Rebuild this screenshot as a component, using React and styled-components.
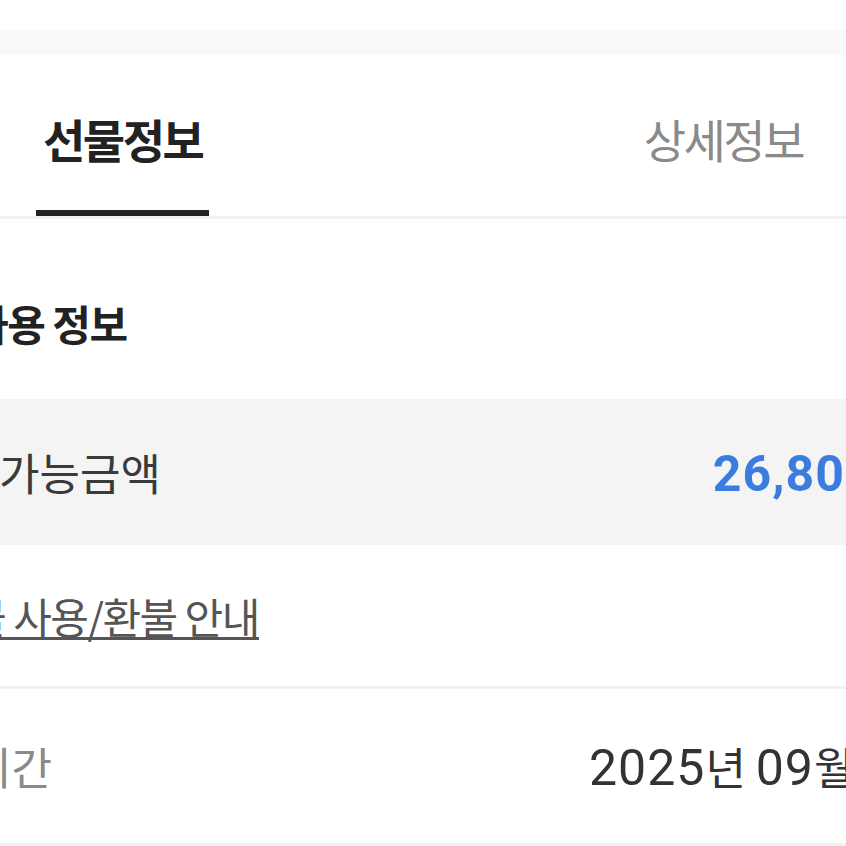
import React from "react";
import styled, { createGlobalStyle } from "styled-components";

const GlobalStyle = createGlobalStyle`
  html, body {
    margin: 0;
    padding: 0;
    background: #ffffff;
  }
  body {
    font-family: "Noto Sans CJK KR", "Noto Sans", sans-serif;
    color: #222;
  }
`;

const Page = styled.div`
  width: 846px;
  height: 846px;
  overflow: hidden;
  padding-top: 30px;
  box-sizing: border-box;
`;

const TopBand = styled.div`
  height: 25px;
  background-color: #f9f9f9;
`;

const TabBar = styled.div`
  display: flex;
  justify-content: space-between;
  height: 164px;
  padding: 0 36px;
  border-bottom: 3px solid #f2f2f2;
  box-sizing: border-box;
`;

const Tab = styled.div`
  display: flex;
  align-items: center;
  padding: 10px 7px 0;
  font-size: 46px;
  letter-spacing: -2.5px;
  font-weight: ${(p) => (p.$active ? 700 : 400)};
  color: ${(p) => (p.$active ? "#222" : "#8a8a8a")};
  border-bottom: 6px solid ${(p) => (p.$active ? "#222" : "transparent")};
`;

const Content = styled.div`
  margin: 0 -160px 0 -120px;
`;

const SectionTitle = styled.h2`
  margin: 0;
  height: 180px;
  display: flex;
  align-items: center;
  padding: 26px 0 0 90px;
  box-sizing: border-box;
  font-size: 42px;
  font-weight: 700;
  letter-spacing: -1.5px;
  color: #222;
`;

const InfoRow = styled.div`
  display: flex;
  align-items: center;
  justify-content: space-between;
  height: ${(p) => p.$height}px;
  padding: 0 ${(p) => p.$end || 0}px 0 ${(p) => p.$indent}px;
  box-sizing: border-box;
  background-color: ${(p) => (p.$shaded ? "#f4f4f4" : "transparent")};
  border-bottom: ${(p) => (p.$divider ? "3px solid #f2f2f2" : "none")};
`;

const Label = styled.span`
  font-size: 44px;
  letter-spacing: 0;
  color: ${(p) => (p.$muted ? "#8a8a8a" : "#3a3a3a")};
`;

const Value = styled.span`
  font-size: 44px;
  letter-spacing: 0;
  font-weight: ${(p) => (p.$accent ? 700 : 400)};
  color: ${(p) => (p.$accent ? "#3b7ddf" : "#333")};
  white-space: nowrap;
`;

const Num = styled.span`
  font-family: Roboto, "Noto Sans CJK KR", sans-serif;
  font-size: 50px;
  letter-spacing: 1px;
`;

const GuideLink = styled.a`
  font-size: 42px;
  letter-spacing: -1.5px;
  color: #555;
  text-decoration: underline;
  text-decoration-thickness: 3px;
  text-underline-offset: 3px;
  cursor: pointer;
`;

export default function App() {
  return (
    <>
      <GlobalStyle />
      <Page>
        <TopBand />
        <TabBar>
          <Tab $active>선물정보</Tab>
          <Tab>상세정보</Tab>
        </TabBar>
        <Content>
          <SectionTitle>사용 정보</SectionTitle>
          <InfoRow $height={146} $indent={38} $end={91} $shaded>
            <Label>사용가능금액</Label>
            <Value $accent>
              <Num>26,800</Num>원
            </Value>
          </InfoRow>
          <InfoRow $height={144} $indent={51} $divider>
            <GuideLink>선물 사용/환불 안내</GuideLink>
          </InfoRow>
          <InfoRow $height={157} $indent={10} $end={43} $divider>
            <Label $muted>유효기간</Label>
            <Value>
              <Num>2025</Num>년 <Num>09</Num>월 <Num>30</Num>일
            </Value>
          </InfoRow>
        </Content>
      </Page>
    </>
  );
}
